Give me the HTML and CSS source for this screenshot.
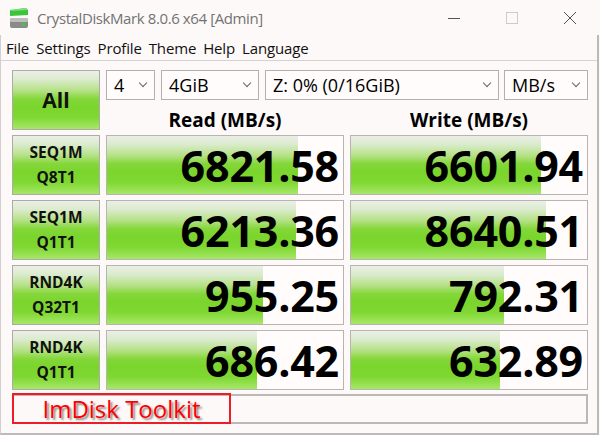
FILE: index.html
```html
<!DOCTYPE html>
<html lang="en">
<head>
<meta charset="utf-8">
<title>CrystalDiskMark 8.0.6 x64 [Admin]</title>
<link rel="stylesheet" href="styles.css">
</head>
<body>
<div class="window">
  <header class="titlebar">
    <svg class="app-icon" viewBox="0 0 22 22" width="22" height="22">
      <path d="M2 3 L18 1 L20 3 L20 8 L2 9 Z" fill="#3cc43c"/>
      <path d="M2 3 L18 1 L20 3 L4 4 Z" fill="#7ee07a"/>
      <rect x="2" y="11" width="18" height="10" rx="2" fill="#8a8a8a"/>
      <rect x="2" y="11" width="18" height="4" rx="1.5" fill="#bdbdbd"/>
      <rect x="14" y="16" width="3" height="3" fill="#37d037"/>
    </svg>
    <span class="title">CrystalDiskMark 8.0.6 x64 [Admin]</span>
    <div class="controls">
      <span class="ctl"><svg width="14" height="14" viewBox="0 0 14 14"><path d="M1 7.5 H13" stroke="#555" stroke-width="1"/></svg></span>
      <span class="ctl"><svg width="14" height="14" viewBox="0 0 14 14"><rect x="1.5" y="1.5" width="11" height="11" fill="none" stroke="#cfcbca" stroke-width="1"/></svg></span>
      <span class="ctl"><svg width="14" height="14" viewBox="0 0 14 14"><path d="M1 1 L13 13 M13 1 L1 13" stroke="#555" stroke-width="1"/></svg></span>
    </div>
  </header>
  <div class="client">
    <nav class="menu">
      <span>File</span><span>Settings</span><span>Profile</span><span>Theme</span><span>Help</span><span>Language</span>
    </nav>
    <main class="panel">
      <div class="grid">
        <div class="btn all">All</div>
        <div class="top">
          <div class="combos">
            <div class="combo w1"><span>4</span><i class="chev"></i></div>
            <div class="combo w2"><span>4GiB</span><i class="chev"></i></div>
            <div class="combo w3"><span>Z: 0% (0/16GiB)</span><i class="chev"></i></div>
            <div class="combo w4"><span>MB/s</span><i class="chev"></i></div>
          </div>
          <div class="heads">
            <div>Read (MB/s)</div>
            <div>Write (MB/s)</div>
          </div>
        </div>

        <div class="btn label">SEQ1M<br>Q8T1</div>
        <div class="cell"><div class="bar" style="width:191px"></div><div class="num">6821.58</div></div>
        <div class="cell"><div class="bar" style="width:190px"></div><div class="num">6601.94</div></div>

        <div class="btn label">SEQ1M<br>Q1T1</div>
        <div class="cell"><div class="bar" style="width:189px"></div><div class="num">6213.36</div></div>
        <div class="cell"><div class="bar" style="width:195px"></div><div class="num">8640.51</div></div>

        <div class="btn label">RND4K<br>Q32T1</div>
        <div class="cell"><div class="bar" style="width:156px"></div><div class="num">955.25</div></div>
        <div class="cell"><div class="bar" style="width:153px"></div><div class="num">792.31</div></div>

        <div class="btn label">RND4K<br>Q1T1</div>
        <div class="cell"><div class="bar" style="width:150px"></div><div class="num">686.42</div></div>
        <div class="cell"><div class="bar" style="width:149px"></div><div class="num">632.89</div></div>
      </div>
      <div class="comment">
        <div class="imdisk">ImDisk Toolkit</div>
      </div>
    </main>
  </div>
</div>
</body>
</html>
```

FILE: styles.css
```css
html, body {
  margin: 0;
  padding: 0;
}
body {
  background: #fdf9f8;
  font-family: "Open Sans", "Noto Sans", sans-serif;
  color: #000;
}
.window {
  width: 600px;
  height: 435px;
  overflow: hidden;
  display: flex;
  flex-direction: column;
}
.titlebar {
  height: 35px;
  flex: none;
  display: flex;
  align-items: center;
}
.app-icon {
  margin-left: 8px;
  margin-right: 7px;
  flex: none;
}
.title {
  flex: 1;
  font-size: 15px;
  color: #737373;
  letter-spacing: -0.4px;
}
.controls {
  display: flex;
  height: 35px;
  margin-right: 1px;
}
.ctl {
  width: 58px;
  display: flex;
  align-items: center;
  justify-content: center;
}
.client {
  flex: 1;
  width: 599px;
  box-sizing: border-box;
  border-left: 1px solid #d2cecd;
  border-right: 2px solid #bdb9b8;
  border-bottom: 2px solid #bdb9b8;
}
.menu {
  height: 25px;
  border-bottom: 1px solid #d6d2d1;
  display: flex;
  align-items: center;
  gap: 7px;
  padding-left: 5px;
  font-size: 15px;
  letter-spacing: -0.15px;
  color: #111;
}
.panel {
  padding: 9px 0 0 11px;
}
.grid {
  display: grid;
  grid-template-columns: 88px 238px 238px;
  grid-template-rows: repeat(5, 60px);
  column-gap: 6px;
  row-gap: 5px;
}
.btn {
  box-sizing: border-box;
  border: 1px solid #aeaaa8;
  background: linear-gradient(#ebefe6 0%, #dcebcf 14%, #b4e184 34%, #84d73a 48%, #7ad52c 62%, #80d833 80%, #a6e768 100%);
  display: flex;
  align-items: center;
  justify-content: center;
  text-align: center;
  font-weight: 700;
  color: #111;
}
.all {
  font-size: 21px;
}
.label {
  font-size: 15.5px;
  line-height: 25px;
}
.top {
  grid-column: 2 / 4;
  display: flex;
  flex-direction: column;
}
.combos {
  display: flex;
  height: 30px;
  gap: 6px;
}
.combo {
  box-sizing: border-box;
  border: 1px solid #b3afae;
  background: #fffcfb;
  display: flex;
  align-items: center;
  justify-content: space-between;
  padding: 0 8px 0 7px;
  font-size: 18px;
}
.w1 { width: 49px; }
.w2 { width: 98px; }
.w3 { width: 234px; }
.w4 { width: 84px; margin-left: -1px; }
.chev {
  width: 5px;
  height: 5px;
  border-right: 1px solid #666;
  border-bottom: 1px solid #666;
  transform: rotate(45deg);
  margin-top: -4px;
}
.heads {
  display: grid;
  grid-template-columns: 238px 238px;
  column-gap: 6px;
  height: 30px;
  box-sizing: border-box;
  align-items: center;
  text-align: center;
  font-weight: 700;
  font-size: 19px;
  padding-top: 7px;
}
.cell {
  box-sizing: border-box;
  border: 1px solid #b9b4b2;
  background: #fffcfb;
  display: grid;
}
.bar, .num {
  grid-area: 1 / 1;
}
.bar {
  height: 100%;
  background: linear-gradient(#eaefe6 0%, #dcebcf 14%, #b4e184 34%, #84d73a 48%, #7ad52c 62%, #80d833 80%, #a6e768 100%);
}
.num {
  justify-self: end;
  align-self: center;
  font-size: 43px;
  font-weight: 700;
  letter-spacing: -0.2px;
  padding-right: 4px;
  margin-top: 1px;
  line-height: 1;
}
.comment {
  margin-top: 4px;
  width: 576px;
  height: 30px;
  box-sizing: border-box;
  border: 2px solid #bdb8b6;
  display: flex;
}
.imdisk {
  box-sizing: border-box;
  width: 219px;
  margin: -3px 0 -2px -2px;
  border: 2px solid #ee1c24;
  color: #ff0000;
  font-size: 24px;
  line-height: 1;
  display: flex;
  align-items: center;
  justify-content: center;
  text-shadow: 2px 2px 2px rgba(0, 0, 0, 0.45);
}
```
